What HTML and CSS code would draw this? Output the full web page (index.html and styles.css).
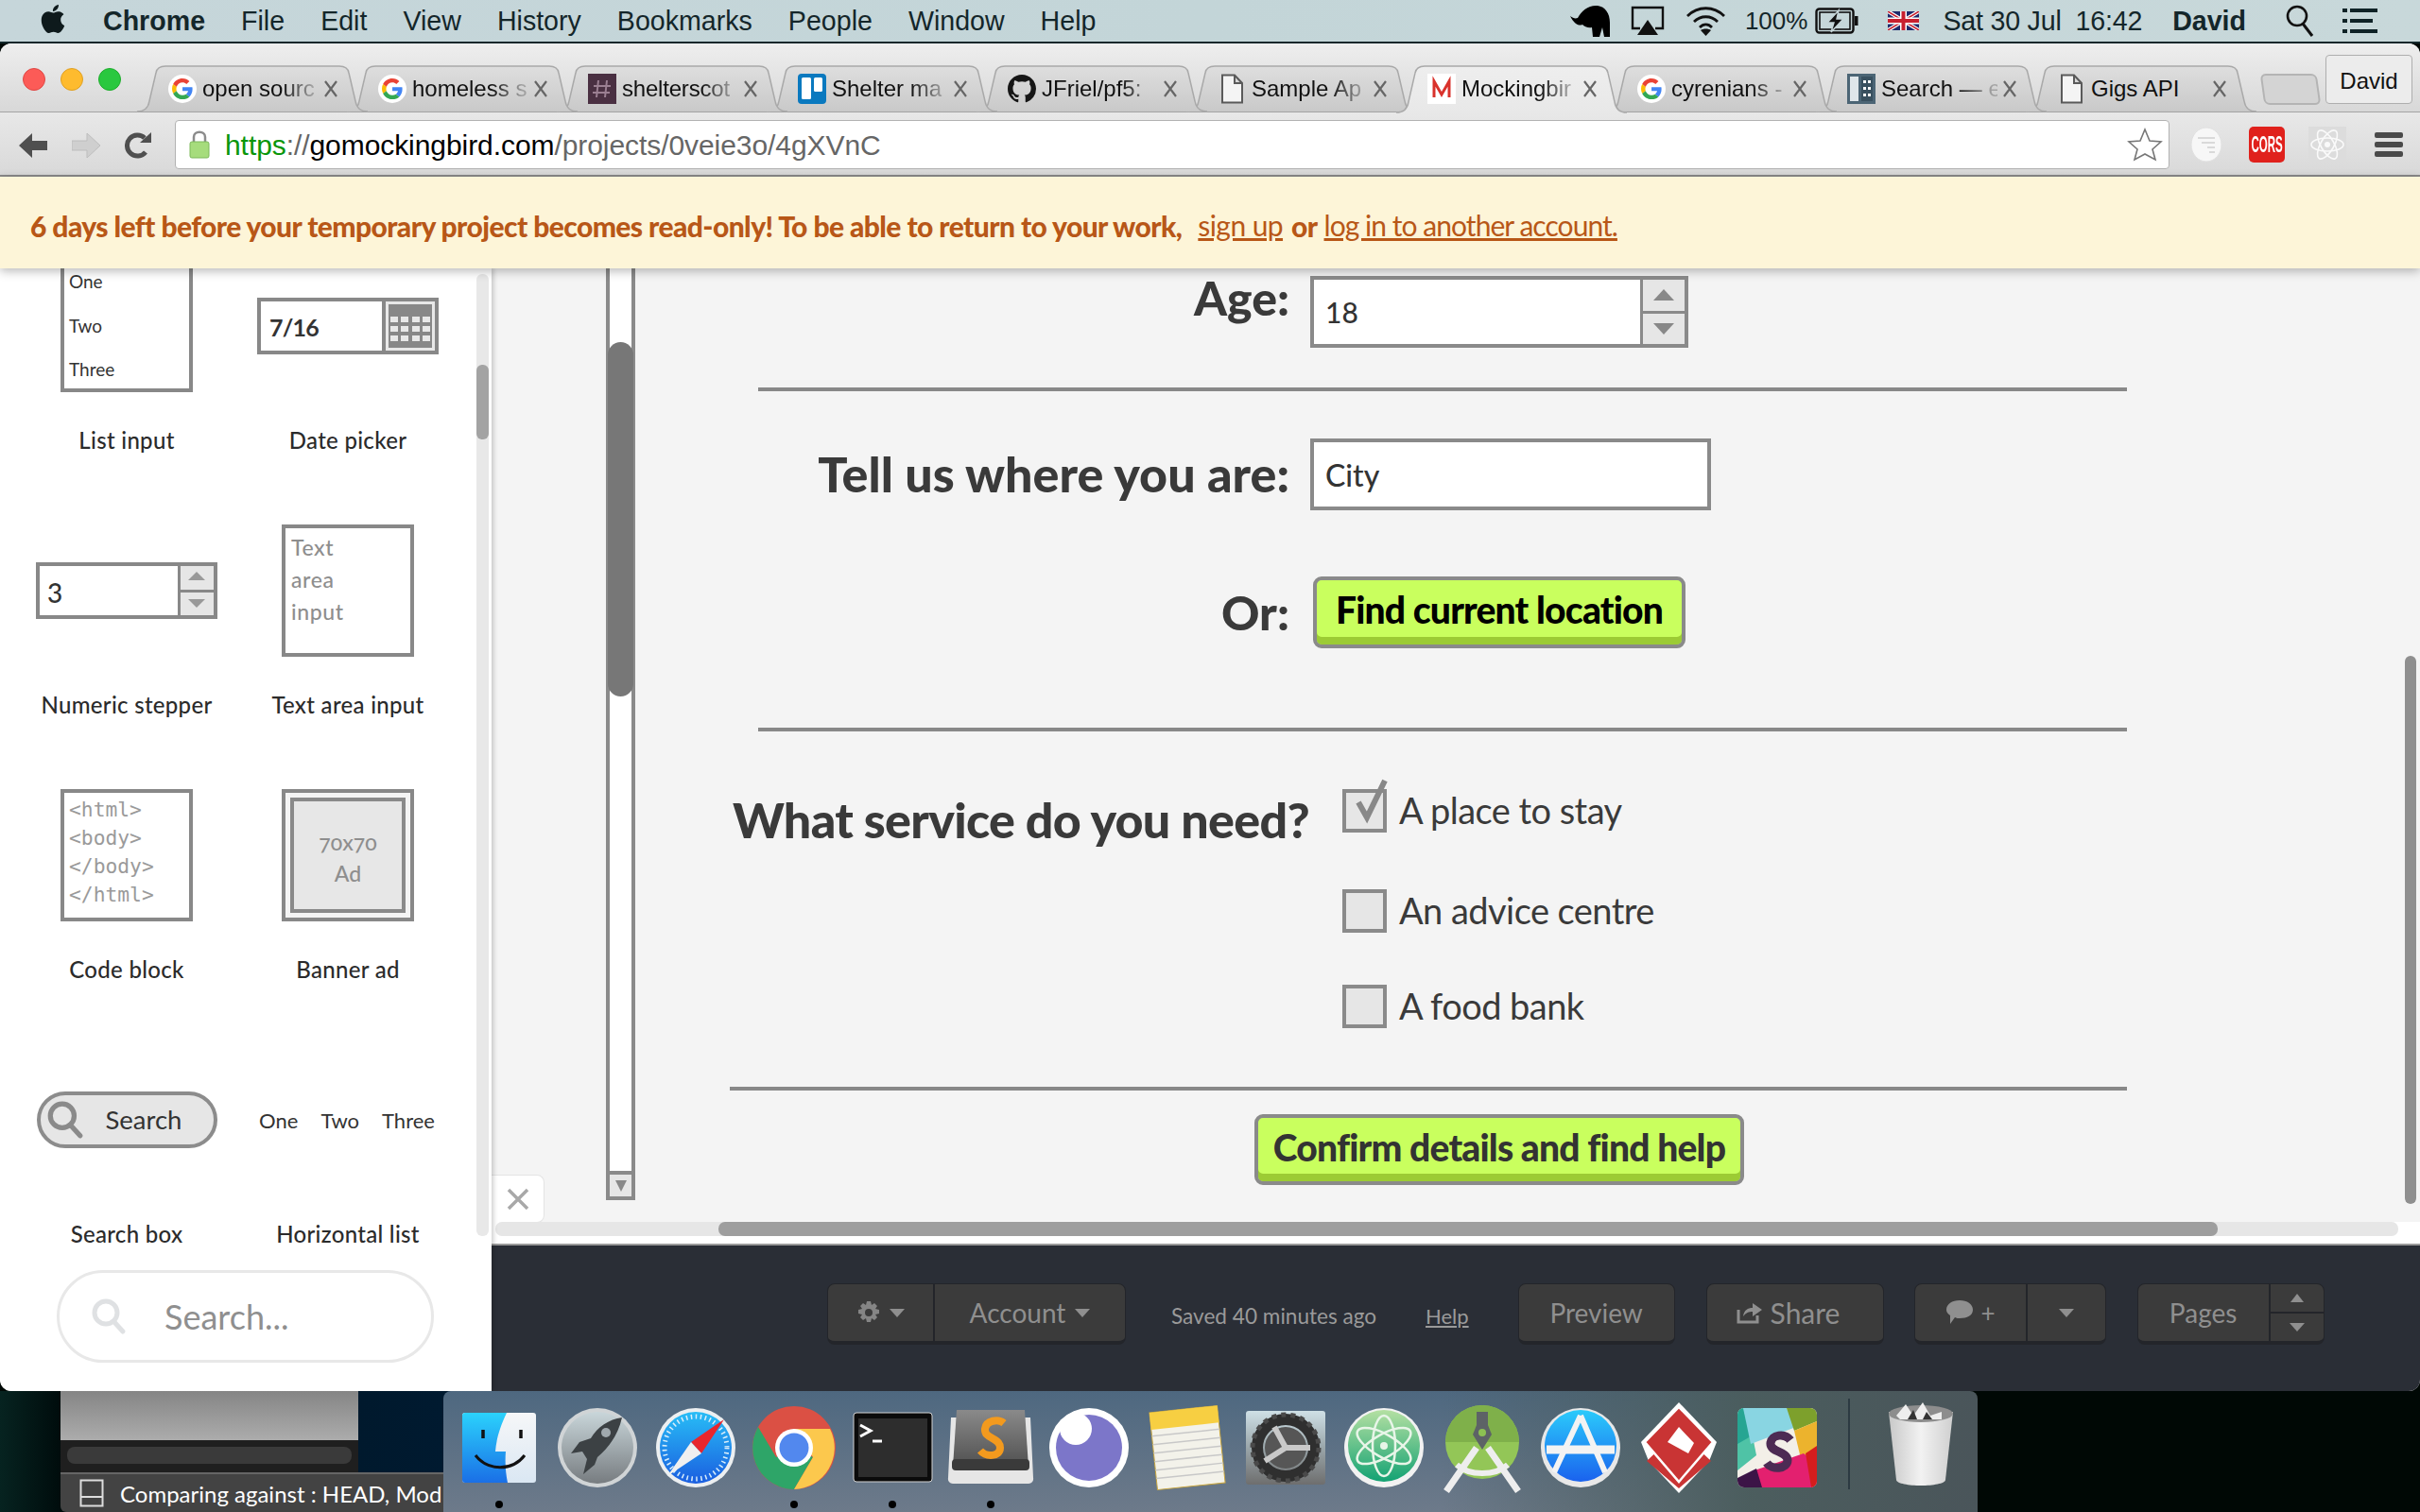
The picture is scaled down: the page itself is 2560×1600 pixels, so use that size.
FILE: index.html
```html
<!DOCTYPE html>
<html lang="en">
<head>
<meta charset="utf-8">
<title>Mockingbird</title>
<link rel="stylesheet" href="styles.css">
</head>
<body>
<svg class="defs" width="0" height="0" aria-hidden="true">
  <defs>
    <linearGradient id="tabFill" x1="0" y1="0" x2="0" y2="1"><stop offset="0" stop-color="#dedede"/><stop offset="1" stop-color="#c9c9c9"/></linearGradient>
    <linearGradient id="tabActive" x1="0" y1="0" x2="0" y2="1"><stop offset="0" stop-color="#eeeeee"/><stop offset="1" stop-color="#e8e8e8"/></linearGradient>
    <symbol id="tabshape" viewBox="0 0 244 50" preserveAspectRatio="none"><path d="M0 49C8 49 12 44 13 38L20 8C21 3 24 1 30 1L214 1C220 1 223 3 224 8L231 38C232 44 236 49 244 49"/></symbol>
    <symbol id="google" viewBox="0 0 60 60"><circle cx="30" cy="30" r="30" fill="#fff"/><g transform="translate(8 8) scale(.92)"><path fill="#EA4335" d="M24 9.5c3.54 0 6.71 1.22 9.21 3.6l6.85-6.85C35.9 2.38 30.47 0 24 0 14.62 0 6.51 5.38 2.56 13.22l7.98 6.19C12.43 13.72 17.74 9.5 24 9.5z"/><path fill="#4285F4" d="M46.98 24.55c0-1.57-.15-3.09-.38-4.55H24v9.02h12.94c-.58 2.96-2.26 5.48-4.78 7.18l7.73 6c4.51-4.18 7.09-10.36 7.09-17.65z"/><path fill="#FBBC05" d="M10.53 28.59c-.48-1.45-.76-2.99-.76-4.59s.27-3.14.76-4.59l-7.98-6.19C.92 16.46 0 20.12 0 24c0 3.88.92 7.54 2.56 10.78l7.97-6.19z"/><path fill="#34A853" d="M24 48c6.48 0 11.93-2.13 15.89-5.81l-7.73-6c-2.15 1.45-4.92 2.3-8.16 2.3-6.26 0-11.57-4.22-13.47-9.91l-7.98 6.19C6.51 42.62 14.62 48 24 48z"/></g></symbol>
    <symbol id="doc" viewBox="0 0 30 32"><path d="M5 1.5H18L26 10V30.5H5Z M18 1.5V10H26" fill="#f4f4f4" stroke="#5a5a5a" stroke-width="2"/></symbol>
    <symbol id="close" viewBox="0 0 16 20"><path d="M2 2L14 18M14 2L2 18" stroke="#666" stroke-width="2.2" fill="none"/></symbol>
    <symbol id="mag" viewBox="0 0 40 40"><circle cx="17" cy="16" r="12" fill="none" stroke="currentColor" stroke-width="5"/><path d="M25 25L35 36" stroke="currentColor" stroke-width="5" stroke-linecap="round"/></symbol>
  </defs>
</svg>

<header class="menubar">
  <svg class="apple" width="30" height="34" viewBox="0 0 24 24"><path fill="#0e1a1c" d="M12.152 6.896c-.948 0-2.415-1.078-3.96-1.04-2.04.027-3.91 1.183-4.961 3.014-2.117 3.675-.546 9.103 1.519 12.09 1.013 1.454 2.208 3.09 3.792 3.039 1.52-.065 2.09-.987 3.935-.987 1.831 0 2.35.987 3.96.948 1.637-.026 2.676-1.48 3.676-2.948 1.156-1.688 1.636-3.325 1.662-3.415-.039-.013-3.182-1.221-3.22-4.857-.026-3.04 2.48-4.494 2.597-4.559-1.429-2.09-3.623-2.324-4.39-2.376-2-.156-3.675 1.09-4.61 1.09zM15.53 3.83c.843-1.012 1.4-2.427 1.245-3.83-1.207.052-2.662.805-3.532 1.818-.78.896-1.454 2.338-1.273 3.714 1.338.104 2.715-.688 3.559-1.701"/></svg>
  <nav class="menu-left">
    <span class="app-name">Chrome</span><span>File</span><span>Edit</span><span>View</span><span>History</span><span>Bookmarks</span><span>People</span><span>Window</span><span>Help</span>
  </nav>
  <div class="menu-right">
    <svg class="st-rhino" width="42" height="34" viewBox="0 0 42 34"><path fill="#000" d="M0 12C3 14 5 15 8 14C12 6 20 0 29 1C37 2 42 9 42 19V34H36L34 24L31 34H24L23 24C19 25 15 23 13 21C9 23 4 20 0 12Z"/></svg>
    <svg class="st-air" width="36" height="32" viewBox="0 0 36 32"><path d="M10 24H2V2H34V24H26" fill="none" stroke="#111" stroke-width="2.4"/><path d="M18 15L29 31H7Z" fill="#111"/></svg>
    <svg class="st-wifi" width="43" height="32" viewBox="0 0 43 32"><g fill="none" stroke="#111" stroke-width="2.8"><path d="M2 11C13 0 30 0 41 11"/><path d="M9 17C16 10 27 10 34 17"/><path d="M15 23C19 19 24 19 28 23"/></g><path d="M21.5 32L16 26C19 24 24 24 27 26Z" fill="#111"/></svg>
    <span class="st-pct">100%</span>
    <svg class="st-batt" width="46" height="28" viewBox="0 0 46 28"><rect x="1.5" y="1.5" width="39" height="25" rx="3" fill="none" stroke="#111" stroke-width="2.4"/><rect x="5" y="5" width="32" height="18" fill="none" stroke="#111" stroke-width="1.6"/><rect x="42" y="9" width="3.5" height="10" fill="#111"/><path d="M25 3L13 16H20L17 26L30 12H23Z" fill="#111" stroke="#c5d5d8" stroke-width="1.4"/></svg>
    <svg class="st-flag" width="33" height="20" viewBox="0 0 33 20"><rect width="33" height="20" fill="#1f2a6b"/><path d="M0 0L33 20M33 0L0 20" stroke="#fff" stroke-width="4"/><path d="M0 0L33 20M33 0L0 20" stroke="#c8202f" stroke-width="1.5"/><path d="M16.500 0V20M0 10H33" stroke="#fff" stroke-width="7"/><path d="M16.500 0V20M0 10H33" stroke="#c8202f" stroke-width="4"/></svg>
    <span class="st-date">Sat 30 Jul</span><span class="st-time">16:42</span>
    <span class="st-user">David</span>
    <svg class="st-search" width="30" height="34" viewBox="0 0 30 34"><circle cx="12" cy="12" r="10" fill="none" stroke="#111" stroke-width="2.6"/><path d="M18 20L28 33" stroke="#111" stroke-width="3"/></svg>
    <svg class="st-list" width="37" height="26" viewBox="0 0 37 26"><g fill="#0f2226"><rect y="0" width="5" height="4"/><rect x="8" y="0" width="29" height="4"/><rect y="11" width="5" height="4"/><rect x="8" y="11" width="24" height="4"/><rect y="22" width="5" height="4"/><rect x="8" y="22" width="29" height="4"/></g></svg>
  </div>
</header>

<div class="window">
  <div class="tabstrip">
    <div class="lights"><i class="light red"></i><i class="light yellow"></i><i class="light green"></i></div>
    <div class="tabs">
      <div class="tab"><svg class="tab-shape"><use href="#tabshape"/></svg><svg class="fav"><use href="#google"/></svg><span class="tab-title">open sourc</span><svg class="tab-x"><use href="#close"/></svg></div>
      <div class="tab"><svg class="tab-shape"><use href="#tabshape"/></svg><svg class="fav"><use href="#google"/></svg><span class="tab-title">homeless s</span><svg class="tab-x"><use href="#close"/></svg></div>
      <div class="tab"><svg class="tab-shape"><use href="#tabshape"/></svg><svg class="fav" viewBox="0 0 30 32"><rect width="30" height="32" fill="#4a3042"/><path d="M11 7L9 25M20 7L18 25M6 13H24M5 20H23" stroke="#9b7f92" stroke-width="2"/></svg><span class="tab-title tab-title-narrow">shelterscot</span><svg class="tab-x"><use href="#close"/></svg></div>
      <div class="tab"><svg class="tab-shape"><use href="#tabshape"/></svg><svg class="fav" viewBox="0 0 30 32"><rect width="30" height="32" rx="4" fill="#0a79bf"/><rect x="4" y="4" width="10" height="23" rx="1.500" fill="#fff"/><rect x="17" y="4" width="9" height="15" rx="1.500" fill="#fff"/></svg><span class="tab-title">Shelter ma</span><svg class="tab-x"><use href="#close"/></svg></div>
      <div class="tab"><svg class="tab-shape"><use href="#tabshape"/></svg><svg class="fav" viewBox="0 0 16 16"><path fill="#161616" d="M8 0C3.58 0 0 3.58 0 8c0 3.54 2.29 6.53 5.47 7.59.4.07.55-.17.55-.38 0-.19-.01-.82-.01-1.49-2.01.37-2.53-.49-2.69-.94-.09-.23-.48-.94-.82-1.13-.28-.15-.68-.52-.01-.53.63-.01 1.08.58 1.23.82.72 1.21 1.87.87 2.33.66.07-.52.28-.87.51-1.07-1.78-.2-3.64-.89-3.64-3.95 0-.87.31-1.59.82-2.15-.08-.2-.36-1.02.08-2.12 0 0 .67-.21 2.2.82.64-.18 1.32-.27 2-.27.68 0 1.36.09 2 .27 1.53-1.04 2.2-.82 2.2-.82.44 1.1.16 1.92.08 2.12.51.56.82 1.27.82 2.15 0 3.07-1.87 3.75-3.65 3.95.29.25.54.73.54 1.48 0 1.07-.01 1.93-.01 2.2 0 .21.15.46.55.38A8.013 8.013 0 0016 8c0-4.42-3.58-8-8-8z"/></svg><span class="tab-title">JFriel/pf5:</span><svg class="tab-x"><use href="#close"/></svg></div>
      <div class="tab"><svg class="tab-shape"><use href="#tabshape"/></svg><svg class="fav"><use href="#doc"/></svg><span class="tab-title">Sample Ap</span><svg class="tab-x"><use href="#close"/></svg></div>
      <div class="tab active"><svg class="tab-shape"><use href="#tabshape"/></svg><svg class="fav" viewBox="0 0 30 32"><rect width="30" height="32" fill="#fff"/><path d="M7 25V8L15 22L23 8V25" fill="none" stroke="#d9322c" stroke-width="3"/></svg><span class="tab-title">Mockingbir</span><svg class="tab-x"><use href="#close"/></svg></div>
      <div class="tab"><svg class="tab-shape"><use href="#tabshape"/></svg><svg class="fav"><use href="#google"/></svg><span class="tab-title">cyrenians -</span><svg class="tab-x"><use href="#close"/></svg></div>
      <div class="tab"><svg class="tab-shape"><use href="#tabshape"/></svg><svg class="fav" viewBox="0 0 30 32"><rect width="30" height="32" fill="#4c6575"/><rect x="3" y="3" width="9" height="26" fill="#dfe6ea"/><rect x="15" y="3" width="12" height="26" fill="#39505f"/><path d="M17 7h3v3h-3zM22 7h3v3h-3zM17 14h3v3h-3zM22 14h3v3h-3zM17 21h3v3h-3zM22 21h3v3h-3z" fill="#fff"/></svg><span class="tab-title">Search — e</span><svg class="tab-x"><use href="#close"/></svg></div>
      <div class="tab"><svg class="tab-shape"><use href="#tabshape"/></svg><svg class="fav"><use href="#doc"/></svg><span class="tab-title tab-title-full">Gigs API</span><svg class="tab-x"><use href="#close"/></svg></div>
    </div>
    <div class="newtab"></div>
    <div class="profile">David</div>
  </div>

  <div class="toolbar">
    <svg class="nav-ic" width="30" height="28" viewBox="0 0 30 28"><path d="M14 1V9H30V19H14V27L0 14Z" fill="#4f4f4f"/></svg>
    <svg class="nav-ic" width="30" height="28" viewBox="0 0 30 28"><path d="M16 1V9H0V19H16V27L30 14Z" fill="#cfcfcf" stroke="#bdbdbd"/></svg>
    <svg class="nav-ic" width="28" height="28" viewBox="0 0 28 28"><path d="M22 21A11 11 0 1 1 21 6" fill="none" stroke="#4f4f4f" stroke-width="5"/><path d="M16 11H28V0Z" fill="#4f4f4f"/></svg>
    <div class="omnibox">
      <svg class="lock" width="22" height="30" viewBox="0 0 22 30"><path d="M5 13V7C5 0 17 0 17 7V13" fill="none" stroke="#8c8c8c" stroke-width="2.500"/><rect x="1" y="12" width="20" height="17" rx="2" fill="#a6dc7c" stroke="#7cb95a"/></svg>
      <span class="url"><span class="u-green">https</span><span class="u-grey">://</span><span class="u-black">gomockingbird.com</span><span class="u-grey">/projects/0veie3o/4gXVnC</span></span>
      <svg class="star" width="38" height="36" viewBox="0 0 38 36"><path d="M19 2L24 14L36 15L27 23L30 34L19 28L8 34L11 23L2 15L14 14Z" fill="#fff" stroke="#777" stroke-width="1.600"/></svg>
    </div>
    <div class="extensions">
      <svg width="34" height="38" viewBox="0 0 34 38"><ellipse cx="17" cy="19" rx="16" ry="18" fill="#f7f7f7" stroke="#e0e0e0"/><path d="M8 12H26M12 17H26M18 22H26M20 27H26" stroke="#cfcfcf" stroke-width="1.500"/></svg>
      <div class="cors"><span>CORS</span></div>
      <svg width="40" height="38" viewBox="0 0 40 38"><rect width="40" height="38" fill="#dcdcdc"/><g fill="none" stroke="#fafafa" stroke-width="1.600"><ellipse cx="20" cy="19" rx="17" ry="7"/><ellipse cx="20" cy="19" rx="17" ry="7" transform="rotate(60 20 19)"/><ellipse cx="20" cy="19" rx="17" ry="7" transform="rotate(120 20 19)"/></g><circle cx="20" cy="19" r="3" fill="#fafafa"/></svg>
      <div class="hamburger"><i></i><i></i><i></i></div>
    </div>
  </div>

  <div class="banner">
    <strong>6 days left before your temporary project becomes read-only! To be able to return to your work,</strong>
    <a class="b-link b-signup">sign up</a>
    <strong>or</strong>
    <a class="b-link b-login">log in to another account.</a>
  </div>

  <div class="workspace">
    <aside class="sidebar">
      <div class="lib-scroll">
        <div class="lib-grid">
          <div class="lib-item"><div class="lib-prev"><div class="w-box w-list"><span>One</span><span>Two</span><span>Three</span></div></div><div class="lib-label">List input</div></div>
          <div class="lib-item"><div class="lib-prev"><div class="w-field"><span class="w-field-text w-date">7/16</span><svg class="w-cal" width="60" height="60" viewBox="0 0 60 60"><rect x="0" y="0" width="60" height="60" fill="#888"/><rect x="4" y="4" width="52" height="52" fill="#e8e8e8"/><rect x="7" y="7" width="46" height="46" fill="#888"/><g fill="#e8e8e8"><path d="M9 20h8v6H9zM20 20h8v6h-8zM32 20h8v6h-8zM43 20h8v6h-8zM9 30h8v6H9zM20 30h8v6h-8zM32 30h8v6h-8zM43 30h8v6h-8zM9 40h8v6H9zM20 40h8v6h-8zM32 40h8v6h-8zM43 40h8v6h-8z"/></g></svg></div></div><div class="lib-label">Date picker</div></div>
          <div class="lib-item"><div class="lib-prev"><div class="w-field"><span class="w-field-text w-num">3</span><div class="w-step"><i class="tri-up"></i><i class="tri-down"></i></div></div></div><div class="lib-label">Numeric stepper</div></div>
          <div class="lib-item"><div class="lib-prev"><div class="w-box w-text"><span>Text</span><span>area</span><span>input</span></div></div><div class="lib-label">Text area input</div></div>
          <div class="lib-item"><div class="lib-prev"><div class="w-box w-code">&lt;html&gt;<br>&lt;body&gt;<br>&lt;/body&gt;<br>&lt;/html&gt;</div></div><div class="lib-label">Code block</div></div>
          <div class="lib-item"><div class="lib-prev"><div class="w-box w-ad"><div class="w-ad-in">70x70<br>Ad</div></div></div><div class="lib-label">Banner ad</div></div>
          <div class="lib-item"><div class="lib-prev"><div class="w-search"><svg class="w-search-ic"><use href="#mag"/></svg><span>Search</span></div></div><div class="lib-label">Search box</div></div>
          <div class="lib-item"><div class="lib-prev"><div class="w-hlist"><span>One</span><span>Two</span><span>Three</span></div></div><div class="lib-label">Horizontal list</div></div>
        </div>
        <div class="lib-track"><div class="lib-thumb"></div></div>
      </div>
      <div class="lib-search"><svg class="lib-search-ic"><use href="#mag"/></svg><span>Search...</span></div>
    </aside>

    <main class="main">
      <div class="canvas">
        <div class="mock-scroll">
          <div class="mock-thumb"></div>
          <div class="mock-down"><i class="tri-down-sm"></i></div>
        </div>
        <div class="form">
          <div class="row row-age">
            <div class="f-label">Age:</div>
            <div class="input input-age"><span>18</span><div class="stepper"><b><i class="tri-up-lg"></i></b><b><i class="tri-down-lg"></i></b></div></div>
          </div>
          <hr class="rule rule-1">
          <div class="row row-city">
            <div class="f-label f-label-city">Tell us where you are:</div>
            <div class="input input-city"><span>City</span></div>
          </div>
          <div class="row row-or">
            <div class="f-label">Or:</div>
            <div class="btn btn-find">Find current location</div>
          </div>
          <hr class="rule rule-2">
          <div class="row-service">
            <div class="f-label f-label-service">What service do you need?</div>
            <div class="checks">
              <div class="check check-1"><span class="box"><svg class="tick" width="42" height="50" viewBox="0 0 42 50"><path d="M10 26L19 42L38 3" fill="none" stroke="#888" stroke-width="6"/></svg></span><span class="check-text">A place to stay</span></div>
              <div class="check check-2"><span class="box"></span><span class="check-text">An advice centre</span></div>
              <div class="check check-3"><span class="box"></span><span class="check-text">A food bank</span></div>
            </div>
          </div>
          <hr class="rule rule-3">
          <div class="confirm-wrap"><div class="btn btn-confirm">Confirm details and find help</div></div>
        </div>
        <div class="page-scroll"></div>
        <div class="dismiss"><svg width="24" height="24" viewBox="0 0 24 24"><path d="M2 2L22 22M22 2L2 22" stroke="#a8a8a8" stroke-width="3.500"/></svg></div>
      </div>
      <div class="hscroll"><div class="hscroll-track"><div class="hscroll-thumb"></div></div></div>
      <footer class="footer">
        <div class="fgroup">
          <div class="fbtn fb-gear"><svg width="24" height="26" viewBox="0 0 24 24"><path fill="#858585" d="M10 0h4l1 4 3-2 3 3-2 3 4 1v4l-4 1 2 3-3 3-3-2-1 4h-4l-1-4-3 2-3-3 2-3-4-1v-4l4-1-2-3 3-3 3 2zM12 8a4 4 0 1 0 0 8 4 4 0 0 0 0-8z"/></svg><i class="caret"></i></div>
          <div class="fbtn fb-account">Account<i class="caret"></i></div>
        </div>
        <span class="saved">Saved 40 minutes ago</span>
        <a class="fhelp">Help</a>
        <div class="fgroup fb-preview"><div class="fbtn">Preview</div></div>
        <div class="fgroup fb-share"><div class="fbtn"><svg width="28" height="24" viewBox="0 0 28 24"><path d="M3 9V22H23V15" fill="none" stroke="#8f8f8f" stroke-width="3"/><path d="M8 16C9 9 13 7 18 7V2L28 9L18 16V11C14 11 11 12 8 16Z" fill="#8f8f8f"/></svg>Share</div></div>
        <div class="fgroup fb-comment">
          <div class="fbtn fb-bubble"><svg width="30" height="28" viewBox="0 0 30 28"><path d="M15 1C23 1 29 5 29 11S23 20 15 20C13 20 12 20 10 19L5 26V17C2 15 1 13 1 11C1 5 7 1 15 1Z" fill="#8f8f8f"/></svg><span class="plus">+</span></div>
          <div class="fbtn fb-more"><i class="caret"></i></div>
        </div>
        <div class="fgroup fb-pages">
          <div class="fbtn fb-pagename">Pages</div>
          <div class="fb-updown"><span><i class="caret-up"></i></span><span><i class="caret"></i></span></div>
        </div>
      </footer>
    </main>
  </div>
</div>

<div class="desktop">
  <div class="leftover">
    <div class="lo-top"></div>
    <div class="lo-mid"><div class="lo-pill"></div></div>
    <div class="lo-status"><svg class="lo-ic" width="26" height="30" viewBox="0 0 26 30"><rect x="1.500" y="1.500" width="23" height="27" fill="none" stroke="#ddd" stroke-width="2"/><path d="M1.500 19H24.500" stroke="#ddd" stroke-width="2"/></svg><span>Comparing against : HEAD, Mod</span></div>
  </div>
  <div class="dock">
    <div class="dock-item run"><svg width="104" height="104" viewBox="0 0 104 104"><defs><linearGradient id="fb" x1="0" y1="0" x2="0" y2="1"><stop offset="0" stop-color="#2bd2fc"/><stop offset="1" stop-color="#1a6fe6"/></linearGradient><linearGradient id="fw" x1="0" y1="0" x2="0" y2="1"><stop offset="0" stop-color="#f6f7f8"/><stop offset="1" stop-color="#dae7f3"/></linearGradient></defs><rect x="13" y="15" width="78" height="74" rx="3" fill="url(#fw)"/><path d="M16 15H60C52 32 49 44 48 56H59C58 68 59 79 61 89H16A3 3 0 0 1 13 86V18A3 3 0 0 1 16 15Z" fill="url(#fb)"/><path d="M35 33V42M75 33V42" stroke="#111" stroke-width="3.500"/><path d="M27 60C40 77 66 77 79 60" fill="none" stroke="#111" stroke-width="3"/></svg><i class="dot"></i></div>
    <div class="dock-item"><svg width="104" height="104" viewBox="0 0 104 104"><defs><linearGradient id="lp" x1="0" y1="0" x2="0" y2="1"><stop offset="0" stop-color="#c9d6da"/><stop offset="1" stop-color="#777c80"/></linearGradient></defs><circle cx="52" cy="52" r="42" fill="#d0d4d6"/><circle cx="52" cy="52" r="38" fill="url(#lp)"/><path d="M78 20C64 22 52 30 45 42L33 46L24 58L36 56L41 64L37 80L49 70L52 62C64 52 74 38 78 20Z" fill="#3c4144"/><circle cx="61" cy="36" r="5" fill="#a0a9ae"/></svg></div>
    <div class="dock-item"><svg width="104" height="104" viewBox="0 0 104 104"><defs><linearGradient id="sf" x1="0" y1="0" x2="0" y2="1"><stop offset="0" stop-color="#28bdf6"/><stop offset="1" stop-color="#1a5ee0"/></linearGradient></defs><circle cx="52" cy="52" r="42" fill="#eceff1"/><circle cx="52" cy="52" r="38" fill="url(#sf)"/><circle cx="52" cy="52" r="33" fill="none" stroke="#d8eefb" stroke-width="5" stroke-dasharray="1.500 3.500"/><path d="M82 22L47 46L58 58Z" fill="#e8262d"/><path d="M22 82L47 46L58 58Z" fill="#f0f0f0"/></svg></div>
    <div class="dock-item run"><svg width="104" height="104" viewBox="0 0 104 104"><circle cx="52" cy="52" r="44" fill="#db5044"/><path d="M14 30A44 44 0 0 0 52 96L72 62L52 52L33 62Z" fill="#2ea568"/><path d="M52 32H90A44 44 0 0 1 52 96L72 62Z" fill="#fcc84d"/><circle cx="52" cy="52" r="20" fill="#fff"/><circle cx="52" cy="52" r="15.500" fill="#5288ee"/></svg><i class="dot"></i></div>
    <div class="dock-item run"><svg width="104" height="104" viewBox="0 0 104 104"><rect x="11" y="15" width="83" height="73" rx="3" fill="#0b0b0b" stroke="#d2d2d2"/><rect x="16" y="21" width="73" height="62" fill="#2d2d2d"/><path d="M18 28L29 34L18 40" fill="none" stroke="#fff" stroke-width="3"/><path d="M31 45H41" stroke="#fff" stroke-width="3"/></svg><i class="dot"></i></div>
    <div class="dock-item run"><svg width="104" height="104" viewBox="0 0 104 104"><defs><linearGradient id="sl" x1="0" y1="0" x2="0" y2="1"><stop offset="0" stop-color="#8a8a8a"/><stop offset="1" stop-color="#505050"/></linearGradient></defs><path d="M10 20H94L97 84A5 5 0 0 1 92 90H12A5 5 0 0 1 7 84Z" fill="#e6e6e6"/><path d="M16 12H88L92 72H12Z" fill="url(#sl)"/><rect x="11" y="64" width="82" height="12" rx="4" fill="#3a3a3a"/><path d="M66 26C60 21 47 23 46 32C45 43 62 41 62 52C62 62 47 62 41 55" fill="none" stroke="#f39a1e" stroke-width="8"/></svg><i class="dot"></i></div>
    <div class="dock-item"><svg width="104" height="104" viewBox="0 0 104 104"><ellipse cx="52" cy="52" rx="42" ry="42" fill="#fff"/><circle cx="52" cy="52" r="35" fill="#7c76c9"/><circle cx="38" cy="32" r="17" fill="#fff"/></svg></div>
    <div class="dock-item"><svg width="104" height="104" viewBox="0 0 104 104"><g transform="rotate(-6 52 52)"><rect x="16" y="11" width="72" height="82" fill="#f3f2ea" stroke="#c9a63d"/><rect x="16" y="11" width="72" height="18" fill="#f7cf42"/><path d="M16 36H88M16 45H88M16 54H88M16 63H88M16 72H88M16 81H88" stroke="#c8c8c8" stroke-width="1.500"/></g></svg></div>
    <div class="dock-item"><svg width="104" height="104" viewBox="0 0 104 104"><defs><linearGradient id="sp" x1="0" y1="0" x2="0" y2="1"><stop offset="0" stop-color="#cfe0e6"/><stop offset=".5" stop-color="#9aa6aa"/><stop offset="1" stop-color="#6e6e6e"/></linearGradient></defs><rect x="10" y="13" width="84" height="78" rx="3" fill="url(#sp)"/><circle cx="52" cy="52" r="30" fill="none" stroke="#2f2f2f" stroke-width="12"/><circle cx="52" cy="52" r="35" fill="none" stroke="#4a4a4a" stroke-width="5" stroke-dasharray="5 5"/><circle cx="52" cy="52" r="22" fill="#565656"/><path d="M52 52L40 30M52 52L30 66M52 52L78 52" stroke="#c9c9c9" stroke-width="6"/></svg></div>
    <div class="dock-item"><svg width="104" height="104" viewBox="0 0 104 104"><defs><linearGradient id="at" x1="0" y1="0" x2="0" y2="1"><stop offset="0" stop-color="#b4e0a2"/><stop offset="1" stop-color="#13a273"/></linearGradient></defs><circle cx="52" cy="52" r="42" fill="#f2f2f2"/><circle cx="52" cy="50" r="38" fill="url(#at)"/><g fill="none" stroke="#e8f5e8" stroke-width="2.500"><ellipse cx="52" cy="50" rx="32" ry="12" transform="rotate(30 52 50)"/><ellipse cx="52" cy="50" rx="32" ry="12" transform="rotate(90 52 50)"/><ellipse cx="52" cy="50" rx="32" ry="12" transform="rotate(150 52 50)"/></g><circle cx="52" cy="50" r="4" fill="#e8f5e8"/></svg></div>
    <div class="dock-item"><svg width="104" height="104" viewBox="0 0 104 104"><circle cx="52" cy="46" r="39" fill="#93c657"/><path d="M13 46A39 39 0 0 1 91 46Z" fill="#7fb04a"/><path d="M46 14H58V28L62 38L52 54L42 38L46 28Z" fill="#5d6366"/><circle cx="52" cy="36" r="4" fill="#8cc152"/><path d="M46 52L14 98M58 52L90 98" stroke="#eee" stroke-width="7"/><path d="M25 70C38 82 66 82 79 70" fill="none" stroke="#eee" stroke-width="6"/></svg></div>
    <div class="dock-item"><svg width="104" height="104" viewBox="0 0 104 104"><defs><linearGradient id="as" x1="0" y1="0" x2="0" y2="1"><stop offset="0" stop-color="#2bcbfb"/><stop offset="1" stop-color="#1a62ee"/></linearGradient></defs><circle cx="52" cy="52" r="42" fill="#e8e8e8"/><circle cx="52" cy="50" r="38" fill="url(#as)"/><path d="M52 18L24 78M52 18L78 78" stroke="#f3f3f3" stroke-width="6"/><path d="M16 54H88" stroke="#f3f3f3" stroke-width="9"/></svg></div>
    <div class="dock-item"><svg width="104" height="104" viewBox="0 0 104 104"><path d="M52 4L92 46L84 66L52 100L20 66L12 46Z" fill="#fff"/><path d="M52 34L86 66L52 95L18 66Z" fill="#c93434"/><path d="M52 9L88 46L52 88L16 46Z" fill="#c93434" stroke="#fff" stroke-width="2.500"/><path d="M52 30L68 47L62 58L40 46Z" fill="#fff"/></svg></div>
    <div class="dock-item"><svg width="104" height="104" viewBox="0 0 104 104"><clipPath id="slk"><rect x="10" y="10" width="84" height="84" rx="7"/></clipPath><g clip-path="url(#slk)"><rect x="10" y="10" width="84" height="84" fill="#f3efe8"/><path d="M10 10H20L30 60L10 76Z" fill="#4fc3a6"/><path d="M10 10H16L24 40L10 48Z" fill="#26a592"/><path d="M16 10H62L72 30L24 48Z" fill="#89d5e2"/><path d="M62 10H94V24L70 34Z" fill="#7da02c"/><path d="M70 34L94 24V68L80 76Z" fill="#ecb32d"/><path d="M28 76L80 58L94 70V94H34Z" fill="#e3206f"/><path d="M82 58L94 50V94H88Z" fill="#d51d1d"/><path d="M10 84L30 74L36 94H10Z" fill="#3c1447"/></g><path d="M66 44C60 36 46 38 45 47C44 57 62 55 63 65C63 75 46 76 41 68" fill="none" stroke="#4d2b54" stroke-width="9"/></svg></div>
    <i class="dock-sep"></i>
    <div class="dock-item dock-trash"><svg width="104" height="104" viewBox="0 0 104 104"><defs><linearGradient id="tr" x1="0" y1="0" x2="1" y2="0"><stop offset="0" stop-color="#c8c8c8"/><stop offset=".5" stop-color="#f2f2f2"/><stop offset="1" stop-color="#cfcfcf"/></linearGradient></defs><path d="M18 14H86L78 86C77 94 27 94 26 86Z" fill="url(#tr)"/><ellipse cx="52" cy="16" rx="34" ry="9" fill="#8d8d8d"/><path d="M26 18L36 6L44 18L54 4L62 18L74 14L74 22L30 22Z" fill="#eee"/><path d="M44 12L48 22H38ZM58 14L64 22H54Z" fill="#333"/></svg></div>
  </div>
</div>
</body>
</html>
```
FILE: styles.css
```css
* { box-sizing: border-box; }
html, body { margin: 0; padding: 0; }
body {
  width: 2560px; height: 1600px; overflow: hidden; position: relative;
  display: flex; flex-direction: column;
  font-family: "Lato", "Liberation Sans", sans-serif;
  background: #000805;
}
.defs { position: absolute; }
i { display: block; font-style: normal; }

/* menu bar */
.menubar {
  height: 46px; flex: none; display: flex; align-items: center;
  background: linear-gradient(90deg, #c6d6da, #c3d5d8 50%, #c8d8da);
  border-bottom: 2px solid #12272b;
  font: 28.600px "Liberation Sans", sans-serif; color: #14262a;
  padding-left: 41px;
}
.apple { margin-top: -4px; }
.menu-left { display: flex; gap: 38px; margin-left: 38px; }
.app-name { font-weight: bold; }
.menu-right { margin-left: auto; display: flex; align-items: center; padding-right: 45px; }
.st-rhino { margin-right: 22px; }
.st-air { margin-right: 22px; }
.st-wifi { margin-right: 20px; }
.st-pct { font-size: 26px; margin-right: 8px; }
.st-batt { margin-right: 31px; }
.st-flag { margin-right: 25px; }
.st-date { margin-right: 15px; letter-spacing: -.2px; }
.st-time { margin-right: 32px; letter-spacing: -.2px; }
.st-user { font-weight: bold; margin-right: 42px; }
.st-search { margin-right: 30px; }

/* window */
.window {
  height: 1426px; flex: none; display: flex; flex-direction: column;
  border-radius: 12px; overflow: hidden; position: relative;
  background: #fff;
}
.tabstrip {
  height: 72px; flex: none; display: flex; position: relative; z-index: 2;
  background: linear-gradient(#eeeeee, #d8d8d8);
  font: 24px "Liberation Sans", sans-serif; color: #111;
}
.lights { display: flex; gap: 16px; padding-left: 24px; padding-top: 26px; width: 145px; }
.light { width: 24px; height: 24px; border-radius: 50%; }
.red { background: #fc5b57; border: 1px solid #df4744; }
.yellow { background: #febb2e; border: 1px solid #dfa023; }
.green { background: #29c83f; border: 1px solid #1dad2b; }
.tabs { display: flex; margin-top: 23px; height: 49px; }
.tab {
  position: relative; width: 244px; height: 49px; margin-right: -22px;
  display: flex; align-items: flex-start; padding: 9px 0 0 33px;
}
.tab:nth-child(1) { z-index: 10; }
.tab:nth-child(2) { z-index: 9; }
.tab:nth-child(3) { z-index: 8; }
.tab:nth-child(4) { z-index: 7; }
.tab:nth-child(5) { z-index: 6; }
.tab:nth-child(6) { z-index: 5; }
.tab:nth-child(7) { z-index: 11; }
.tab:nth-child(8) { z-index: 4; }
.tab:nth-child(9) { z-index: 3; }
.tab:nth-child(10) { z-index: 2; }
.tab-shape { position: absolute; left: 0; top: 0; width: 244px; height: 50px; fill: url(#tabFill); stroke: #a9a9a9; stroke-width: 1.500; overflow: visible; }
.tab.active .tab-shape { fill: url(#tabActive); height: 51px; }
.fav { width: 30px; height: 32px; flex: none; position: relative; }
.tab-title {
  position: relative; width: 123px; margin: 0 5px 0 6px; white-space: nowrap; overflow: hidden;
  line-height: 32px;
  -webkit-mask-image: linear-gradient(90deg, #000 68%, rgba(0,0,0,.25) 95%);
  mask-image: linear-gradient(90deg, #000 68%, rgba(0,0,0,.25) 95%);
}
.tab-title-full { -webkit-mask-image: none; mask-image: none; }
.tab-title-narrow { letter-spacing: -.2px; }
.tab-x { position: relative; width: 16px; height: 20px; margin-top: 6px; flex: none; }
.newtab {
  width: 60px; height: 33px; margin: 32px 0 0 28px; border: 2px solid #b4b4b4; border-radius: 6px;
  background: #d4d4d4; transform: skewX(8deg); position: relative;
}
.profile {
  margin: 12px 8px 0 auto; width: 92px; height: 52px; border: 1px solid #aeaeae; border-radius: 4px;
  background: #ececec; text-align: center; line-height: 54px; font-size: 24px;
}

.toolbar {
  height: 69px; flex: none; display: flex; align-items: flex-start;
  background: linear-gradient(#e8e8e8, #d9d9d9);
  border-top: 1px solid #a4a4a4; border-bottom: 2px solid #8a8a8a; position: relative;
}
.nav-ic { margin-top: 21px; margin-left: 26px; flex: none; }
.nav-ic:first-child { margin-left: 20px; }
.omnibox {
  margin-left: 25px; margin-top: 8px; width: 2110px; height: 52px;
  border: 1px solid #b2b2b2; border-radius: 4px; background: #fff;
  display: flex; align-items: center; padding-left: 14px;
  font: 30px "Liberation Sans", sans-serif;
}
.lock { flex: none; }
.url { margin: 2px 0 0 16px; white-space: nowrap; letter-spacing: -.07px; }
.u-green { color: #0a960a; }
.u-grey { color: #666; }
.u-black { color: #000; }
.star { margin-left: auto; margin-right: 6px; }
.extensions { display: flex; align-items: center; margin: 8px 0 0 22px; height: 52px; }
.extensions > svg:first-child { margin-right: 28px; }
.cors {
  width: 38px; height: 38px; background: #e0211c; border-radius: 5px; color: #fff; margin-right: 25px;
  font: bold 16px "Liberation Sans", sans-serif; display: flex; align-items: center; justify-content: center;
}
.cors span { display: block; transform: scale(.72, 1.5); }
.hamburger { margin-left: 30px; display: flex; flex-direction: column; gap: 4px; }
.hamburger i { width: 30px; height: 6px; background: #4a4a4a; border-radius: 2px; }

.banner {
  height: 97px; flex: none; background: #fdf5d8; color: #b85717;
  display: flex; align-items: center; padding: 6px 0 0 32px; font-size: 30px; white-space: nowrap;
  position: relative; z-index: 3; box-shadow: 0 3px 10px rgba(0,0,0,.28);
  letter-spacing: -.58px;
}
.banner strong { font-weight: 900; }
.b-link { font-weight: 400; text-decoration: underline; margin-top: -2px; }
.b-signup { margin: -2px 9px 0 17px; }
.b-login { margin-left: 7px; letter-spacing: -.95px; }

/* workspace */
.workspace { flex: 1; display: flex; min-height: 0; }
.sidebar {
  width: 520px; flex: none; background: #fff; display: flex; flex-direction: column;
  position: relative; z-index: 2; box-shadow: 2px 0 5px rgba(0,0,0,.2);
  border-bottom-left-radius: 12px;
}
.lib-scroll { height: 1060px; flex: none; overflow: hidden; position: relative; }
.lib-grid { display: grid; grid-template-columns: 234px 234px; grid-auto-rows: 280px; padding-left: 17px; margin-top: -9px; }
.lib-item { display: flex; flex-direction: column; align-items: center; }
.lib-prev { height: 140px; display: flex; align-items: center; justify-content: center; width: 100%; }
.lib-label { margin-top: 36px; font-size: 24px; font-weight: 500; line-height: 30px; color: #2b2b2b; letter-spacing: .3px; }
.lib-track { position: absolute; left: 504px; top: 6px; width: 13px; height: 1018px; background: #e8e8e8; border-radius: 6px; }
.lib-thumb { margin-top: 96px; height: 79px; background: #a3a3a3; border-radius: 6px; }
.w-box { width: 140px; height: 140px; border: 4px solid #888; background: #fff; display: flex; flex-direction: column; overflow: hidden; }
.w-list { padding: 0 0 0 5px; font-size: 19px; line-height: 46.500px; color: #333; }
.w-list span { display: block; margin-top: 0; }
.w-list span:first-child { margin-top: -4px; }
.w-text { padding: 3px 0 0 6px; font-size: 23px; line-height: 34px; color: #8e8e8e; font-weight: 500; letter-spacing: .6px; }
.w-code { font: 21.300px/30px "DejaVu Sans Mono", monospace; color: #9a9a9a; padding: 3px 0 0 5px; display: block; }
.w-ad { padding: 5px; background: #f4f4f4; }
.w-ad-in { flex: 1; border: 4px solid #8a8a8a; background: #e7e7e7; color: #8e8e8e; font-size: 23px; line-height: 33px; text-align: center; display: flex; align-items: center; justify-content: center; font-weight: 500; padding-top: 5px; font-variant-numeric: oldstyle-nums; }
.w-field { width: 192px; height: 60px; border: 4px solid #888; background: #fff; display: flex; align-items: center; position: relative; }
.w-field-text { font-size: 28px; color: #333; margin: 3px 0 0 10px; font-weight: 500; }
.w-date { font-size: 25px; letter-spacing: -.8px; margin: 1px 0 0 9px; font-weight: 700; }
.w-num { margin-left: 8px; }
.w-cal { position: absolute; right: -4px; top: -4px; }
.w-step { position: absolute; right: 0; top: 0; bottom: 0; width: 38px; background: #888; border-left: 0; display: flex; flex-direction: column; gap: 3px; padding-left: 3px; }
.w-step i { flex: 1; background: #e6e6e6; position: relative; }
.tri-up::after, .tri-down::after { content: ""; position: absolute; left: 8px; top: 6px; border: 9px solid transparent; border-top: 0; border-bottom: 9px solid #999; }
.tri-down::after { border-bottom: 0; border-top: 9px solid #999; top: 7px; }
.w-search { width: 191px; height: 60px; border: 4px solid #8c8c8c; border-radius: 30px; background: #e6e6e6; display: flex; align-items: center; font-size: 27.500px; color: #333; }
.w-search span { margin-left: 22px; margin-top: -2px; }
.w-search-ic { width: 42px; height: 44px; margin-left: 5px; color: #8a8a8a; flex: none; }
.w-hlist { display: flex; gap: 24px; font-size: 22px; color: #333; margin-left: -2px; }
.lib-search {
  width: 399px; height: 98px; margin-left: 60px; border: 3px solid #e8e8e8; border-radius: 49px;
  display: flex; align-items: center; font-size: 36px; color: #8f8f8f; background: #fff;
}
.lib-search-ic { width: 40px; height: 42px; margin-left: 32px; color: #dfe1e3; flex: none; }
.lib-search span { margin-left: 39px; }

.main { flex: 1; display: flex; flex-direction: column; min-width: 0; }
.canvas { height: 1009px; flex: none; background: #f4f4f4; display: flex; position: relative; overflow: hidden; }
.mock-scroll {
  margin-left: 121px; width: 31px; height: 986px; border: solid #8a8a8a; border-width: 0 4px 4px; background: #fff; position: relative; flex: none;
}
.mock-thumb { position: absolute; left: -2px; right: -2px; top: 78px; height: 375px; background: #777; border-radius: 14px; }
.mock-down { position: absolute; left: 0; right: 0; bottom: 0; height: 27px; background: #e6e6e6; border-top: 4px solid #8a8a8a; display: flex; justify-content: center; padding-top: 6px; }
.tri-down-sm { width: 0; height: 0; border: 6px solid transparent; border-bottom: 0; border-top: 12px solid #888; }
.form { margin-left: 130px; width: 1448px; flex: none; color: #3a3a3a; }
.row { display: flex; align-items: center; margin-left: -30px; }
.f-label { width: 592px; flex: none; text-align: right; font-size: 52px; font-weight: 900; line-height: 60px; white-space: nowrap; }
.f-label-city { margin-top: -2px; }
.row-age { margin-top: 8px; }
.row-age .f-label { margin-top: -30px; font-size: 50px; }
.row-or .f-label { font-size: 50px; }
.row .input { margin-left: 22px; }
.input { height: 76px; background: #fff; border: 4px solid #8a8a8a; display: flex; align-items: center; font-size: 32px; font-weight: 500; position: relative; color: #333; }
.input span { margin-left: 12px; }
.input-age { width: 400px; font-size: 30px; }
.input-city { width: 424px; }
.stepper { position: absolute; right: 0; top: 0; bottom: 0; width: 47px; background: #8a8a8a; padding-left: 3px; display: flex; flex-direction: column; gap: 3px; }
.stepper b { flex: 1; background: #e6e6e6; display: flex; align-items: center; justify-content: center; }
.tri-up-lg { border: 11px solid transparent; border-top: 0; border-bottom: 12px solid #888; }
.tri-down-lg { border: 11px solid transparent; border-bottom: 0; border-top: 12px solid #888; }
.rule { height: 4px; border: 0; background: #888; margin: 0; }
.rule-1 { margin-top: 42px; }
.row-city { margin-top: 50px; }
.row-or { margin-top: 70px; }
.btn {
  background: #c9ff5e; border: 4px solid #8a8a8a; border-radius: 9px;
  box-shadow: inset 0 -8px 0 #9ccb34; font-weight: 900; display: flex; align-items: center; justify-content: center; height: 76px; white-space: nowrap; padding-bottom: 6px;
  letter-spacing: -.8px;
}
.row .btn-find { width: 394px; margin-left: 25px; font-size: 39px; color: #000; }
.rule-2 { margin-top: 84px; }
.row-service { display: flex; margin-left: -27px; margin-top: 61px; height: 317px; }
.f-label-service { width: 603px; margin-top: 2px; letter-spacing: -.7px; }
.checks { margin-left: 42px; font-size: 38px; letter-spacing: -.55px; }
.check { display: flex; align-items: center; height: 46px; white-space: nowrap; }
.check .box { width: 47px; height: 46px; border: 4px solid #8a8a8a; background: #e6e6e6; position: relative; margin-right: 13px; flex: none; }
.check-text { margin-top: -3px; }
.check-2 { margin-top: 60px; }
.check-3 { margin-top: 55px; }
.tick { position: absolute; left: 3px; top: -16px; }
.rule-3 { margin-left: -30px; width: 1478px; margin-top: -2px; }
.confirm-wrap { display: flex; margin-top: 25px; }
.btn-confirm { margin-left: 525px; width: 518px; height: 75px; font-size: 39px; color: #333; }
.page-scroll { position: absolute; left: 2024px; top: 410px; width: 12px; height: 580px; background: #8f8f8f; border-radius: 6px; }
.dismiss { position: absolute; left: 0; top: 959px; width: 56px; height: 51px; background: #fff; border-radius: 0 8px 8px 0; border: 1px solid #e4e4e4; border-left: 0; display: flex; align-items: center; justify-content: center; }

.hscroll { height: 25px; flex: none; background: #fff; padding: 0 23px 0 4px; border-bottom: 2px solid #9a9a9a; }
.hscroll-track { height: 15px; background: #e6e6e6; border-radius: 7px; padding-left: 236px; }
.hscroll-thumb { width: 1586px; height: 15px; background: #9e9e9e; border-radius: 7px; }

.footer {
  flex: 1; background: #2a2e36; display: flex; align-items: flex-start; padding: 40px 0 0 355px;
  font-size: 28px; color: #8f8f8f;
}
.fgroup { display: flex; height: 65px; background: #3b3b3b; border-radius: 8px; border: 1px solid #23252a; border-bottom: 4px solid #23252a; }
.fbtn { display: flex; align-items: center; justify-content: center; gap: 10px; height: 100%; }
.fb-gear { width: 113px; border-right: 2px solid #23252a; }
.fb-account { width: 201px; }
.caret { width: 0; height: 0; border: 8px solid transparent; border-bottom: 0; border-top: 9px solid #8f8f8f; }
.caret-up { width: 0; height: 0; border: 7px solid transparent; border-top: 0; border-bottom: 9px solid #8f8f8f; }
.saved { font-size: 22.600px; margin: 21px 0 0 48px; width: 218px; white-space: nowrap; color: #9a9a9a; }
.fhelp { font-size: 22px; margin: 21px 0 0 51px; text-decoration: underline; color: #9a9a9a; }
.fb-preview { width: 166px; margin-left: 52px; justify-content: center; }
.fb-share { width: 188px; margin-left: 33px; justify-content: flex-start; padding-left: 30px; font-size: 30px; }
.fb-share .fbtn { gap: 9px; }
.fb-comment { width: 203px; margin-left: 32px; }
.fb-bubble { width: 119px; border-right: 2px solid #23252a; gap: 8px; }
.plus { font-size: 26px; }
.fb-more { flex: 1; }
.fb-pages { width: 198px; margin-left: 33px; }
.fb-pagename { width: 140px; border-right: 2px solid #23252a; }
.fb-updown { flex: 1; display: flex; flex-direction: column; }
.fb-updown span { flex: 1; display: flex; align-items: center; justify-content: center; }
.fb-updown span:first-child { border-bottom: 2px solid #23252a; }

/* desktop strip */
.desktop {
  flex: 1; display: flex; min-height: 0;
  background: linear-gradient(90deg, #062320 0, #000c0c 64px, #00192d 380px, #001a30 469px, #000805 2092px);
}
.leftover { margin-left: 64px; width: 405px; flex: none; overflow: hidden; display: flex; flex-direction: column; }
.lo-top { width: 315px; height: 52px; background: linear-gradient(#858585, #acacac); flex: none; }
.lo-mid { width: 315px; height: 34px; background: #1f1f1f; padding: 7px 7px 0; flex: none; }
.lo-pill { height: 18px; background: #3a3a3a; border-radius: 8px; }
.lo-status {
  flex: 1; background: #434343; border-top: 2px solid #666; border-radius: 0 0 0 6px;
  display: flex; align-items: center; gap: 17px; padding-left: 20px;
  color: #fff; font-size: 24px; white-space: nowrap;
}
.lo-ic { flex: none; }
.dock {
  width: 1623px; flex: none; display: flex; padding: 8px 0 0 7px; border-radius: 8px 8px 0 0; position: relative;
  background: linear-gradient(90deg, rgba(80,105,130,0) 0, rgba(80,105,130,0) 65%, rgba(74,92,92,.95) 85%, rgba(74,85,90,1) 100%), linear-gradient(#4e6880, #6d7a8a);
}
.dock-item { width: 104px; height: 104px; flex: none; position: relative; }
.dot { position: absolute; left: 48px; top: 108px; width: 8px; height: 8px; background: #000; border-radius: 50%; }
.dock-sep { width: 2px; height: 96px; background: #2c3a42; margin: 0 23px 0 23px; flex: none; }
```
